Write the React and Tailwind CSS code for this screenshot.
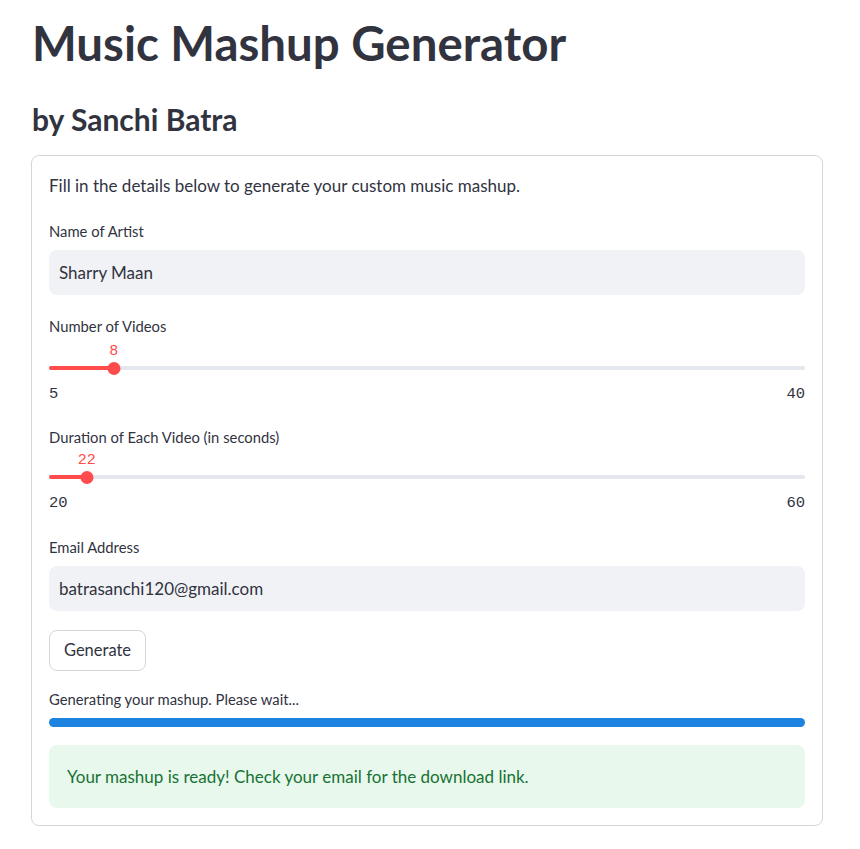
const sans = "font-['Lato','Noto_Sans',sans-serif]";
const mono = "font-['Liberation_Mono','DejaVu_Sans_Mono',monospace]";

function Slider({ label, min, max, value, labelGap }) {
  const pct = ((value - min) / (max - min)) * 100;
  return (
    <div className="flex flex-col">
      <div className="h-[20px] flex items-center text-[14.8px] text-[#31333f]">{label}</div>
      <div className={`relative h-[20px] ${labelGap}`}>
        <span
          className={`absolute top-[2px] -translate-x-1/2 text-[15px] leading-[20px] text-[#ff4b4b] ${mono}`}
          style={{ left: `${pct}%` }}
        >
          {value}
        </span>
      </div>
      <div className="relative h-[16px]">
        <div className="absolute left-0 right-0 top-[6px] h-[4px] rounded-full bg-[#e5e7ee]" />
        <div className="absolute left-0 top-[6px] h-[4px] rounded-full bg-[#ff4b4b]" style={{ width: `${pct}%` }} />
        <div
          className="absolute top-[1.5px] h-[13px] w-[13px] -translate-x-1/2 rounded-full bg-[#ff4b4b]"
          style={{ left: `${pct}%` }}
        />
      </div>
      <div className={`mt-[7px] flex h-[20px] pt-[4px] items-center justify-between text-[15.5px] text-[#31333f] ${mono}`}>
        <span>{min}</span>
        <span>{max}</span>
      </div>
    </div>
  );
}

function TextInput({ label, value }) {
  return (
    <div className="flex flex-col">
      <div className="h-[20px] flex items-center text-[14.8px] text-[#31333f]">{label}</div>
      <div className="mt-[9px] h-[45px] rounded-lg bg-[#f0f2f6] px-[10px] flex items-center text-[17px] text-[#31333f]">
        {value}
      </div>
    </div>
  );
}

export default function App() {
  return (
    <div className={`min-h-screen bg-white pl-[32px] pt-[14px] ${sans}`}>
      <h1 className="text-[47.4px] font-bold leading-[58px] text-[#31333f]">Music Mashup Generator</h1>
      <h2 className="mt-[29px] text-[30px] font-bold leading-[36px] text-[#31333f]">by Sanchi Batra</h2>

      <div className="mt-[18px] -ml-px w-[792px] rounded-lg border border-[#d6d6d9] px-[17px] pt-[18px] pb-[17px]">
        <p className="h-[24px] flex items-center text-[17px] text-[#31333f]">
          Fill in the details below to generate your custom music mashup.
        </p>

        <div className="mt-[23px]">
          <TextInput label="Name of Artist" value="Sharry Maan" />
        </div>

        <div className="mt-[21px]">
          <Slider label="Number of Videos" min={5} max={40} value={8} labelGap="mt-[4px]" />
        </div>

        <div className="mt-[24px]">
          <Slider label="Duration of Each Video (in seconds)" min={20} max={60} value={22} labelGap="mt-[2px]" />
        </div>

        <div className="mt-[25px]">
          <TextInput label="Email Address" value="batrasanchi120@gmail.com" />
        </div>

        <button className="mt-[19px] h-[41px] w-[97px] rounded-lg border border-[#d6d6d9] bg-white text-[16.5px] text-[#31333f]">
          Generate
        </button>

        <div className="mt-[18px] h-[20px] flex items-center text-[14.8px] text-[#31333f]">
          Generating your mashup. Please wait...
        </div>
        <div className="mt-[9px] h-[9px] rounded-full bg-[#1c83e1]" />

        <div className="mt-[18px] h-[63px] rounded-lg bg-[#e8f8ed] px-[18px] flex items-center text-[17px] text-[#177233]">
          Your mashup is ready! Check your email for the download link.
        </div>
      </div>
    </div>
  );
}
